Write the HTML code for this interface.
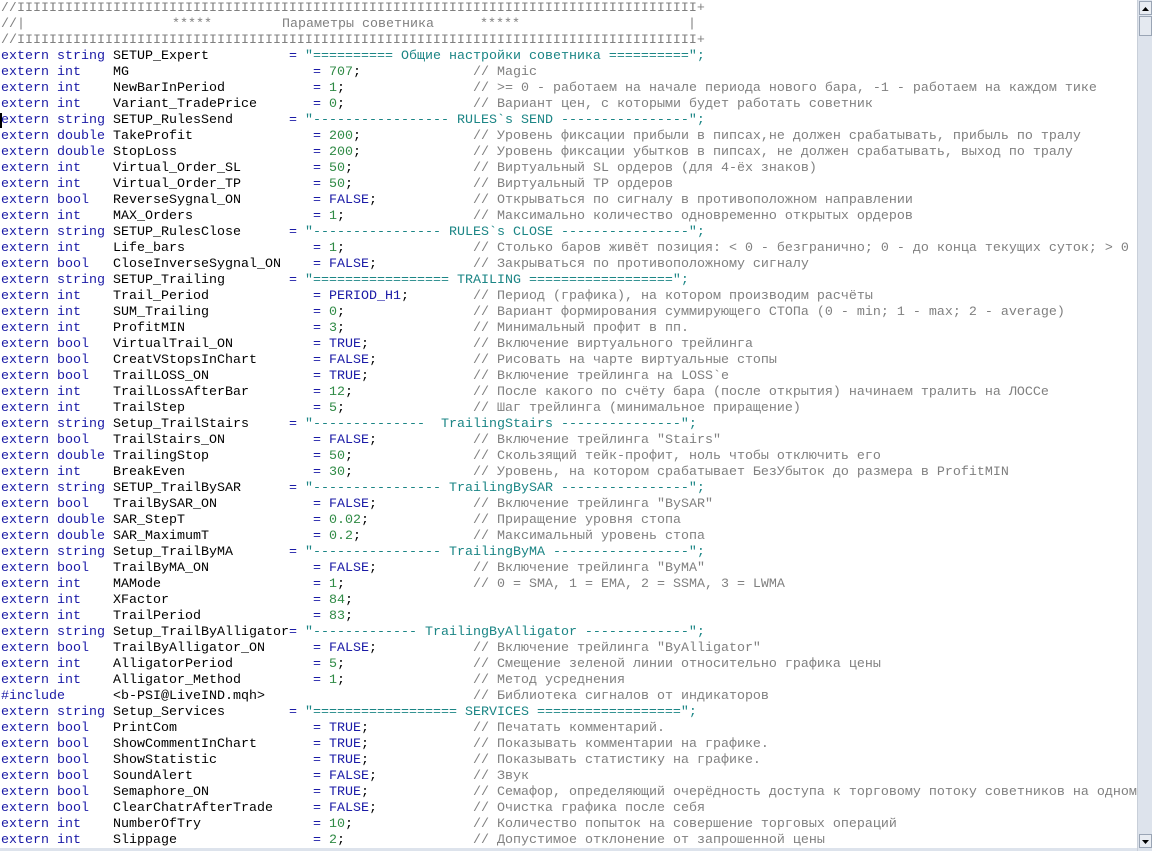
<!DOCTYPE html>
<html><head><meta charset="utf-8"><style>
html,body{margin:0;padding:0;background:#fff;width:1152px;height:851px;overflow:hidden}
#ed{position:absolute;left:0;top:2px;width:1137px;height:849px;overflow:hidden;font-family:"Liberation Mono","DejaVu Sans Mono",monospace;font-size:13.33px;color:#000}
.l{position:absolute;left:0;height:16px;line-height:16px;width:1400px;white-space:pre}
.l span{position:absolute;top:0}
.l span span{position:static}
.a{left:1px;color:#1a1aa6}
.b{left:113px}
.c{left:313px}
.s{left:289px}
.d{left:473px;color:#808080}
.g{color:#808080}
.k{color:#1a1aa6}
.n{color:#2f8a45}
.t{color:#1b8585}
#sb{position:absolute;left:1137px;top:0;width:15px;height:851px;background:#dde3ec;border-left:1px solid #c8cfd9}
.btn{position:absolute;left:1px;width:13px;height:14px;background:#e8ecf2;border:1px solid #9aa5b5;box-sizing:border-box}
</style></head><body>
<div id="ed">
<div class="l g" style="top:-1px"><span style="left:1px">//IIIIIIIIIIIIIIIIIIIIIIIIIIIIIIIIIIIIIIIIIIIIIIIIIIIIIIIIIIIIIIIIIIIIIIIIIIIIIIIIIIIII+</span></div>
<div class="l g" style="top:15px"><span style="left:1px">//|</span><span style="left:172px">*****</span><span style="left:282px">Параметры советника</span><span style="left:480px">*****</span><span style="left:688px">|</span></div>
<div class="l g" style="top:31px"><span style="left:1px">//IIIIIIIIIIIIIIIIIIIIIIIIIIIIIIIIIIIIIIIIIIIIIIIIIIIIIIIIIIIIIIIIIIIIIIIIIIIIIIIIIIIII+</span></div>
<div class="l" style="top:47px"><span class="a">extern string</span><span class="b">SETUP_Expert</span><span class="s"><span class="k">=</span> <span class="t">"========== Общие настройки советника ==========";</span></span></div>
<div class="l" style="top:63px"><span class="a">extern int</span><span class="b">MG</span><span class="c"><span class="k">=</span> <span class="n">707</span>;</span><span class="d">// Magic</span></div>
<div class="l" style="top:79px"><span class="a">extern int</span><span class="b">NewBarInPeriod</span><span class="c"><span class="k">=</span> <span class="n">1</span>;</span><span class="d">// &gt;= 0 - работаем на начале периода нового бара, -1 - работаем на каждом тике</span></div>
<div class="l" style="top:95px"><span class="a">extern int</span><span class="b">Variant_TradePrice</span><span class="c"><span class="k">=</span> <span class="n">0</span>;</span><span class="d">// Вариант цен, с которыми будет работать советник</span></div>
<div class="l" style="top:111px"><span style="left:0;width:2px;height:15px;background:#000"></span><span class="a">extern string</span><span class="b">SETUP_RulesSend</span><span class="s"><span class="k">=</span> <span class="t">"----------------- RULES`s SEND ----------------";</span></span></div>
<div class="l" style="top:127px"><span class="a">extern double</span><span class="b">TakeProfit</span><span class="c"><span class="k">=</span> <span class="n">200</span>;</span><span class="d">// Уровень фиксации прибыли в пипсах,не должен срабатывать, прибыль по тралу</span></div>
<div class="l" style="top:143px"><span class="a">extern double</span><span class="b">StopLoss</span><span class="c"><span class="k">=</span> <span class="n">200</span>;</span><span class="d">// Уровень фиксации убытков в пипсах, не должен срабатывать, выход по тралу</span></div>
<div class="l" style="top:159px"><span class="a">extern int</span><span class="b">Virtual_Order_SL</span><span class="c"><span class="k">=</span> <span class="n">50</span>;</span><span class="d">// Виртуальный SL ордеров (для 4-ёх знаков)</span></div>
<div class="l" style="top:175px"><span class="a">extern int</span><span class="b">Virtual_Order_TP</span><span class="c"><span class="k">=</span> <span class="n">50</span>;</span><span class="d">// Виртуальный TP ордеров</span></div>
<div class="l" style="top:191px"><span class="a">extern bool</span><span class="b">ReverseSygnal_ON</span><span class="c"><span class="k">= FALSE</span>;</span><span class="d">// Открываться по сигналу в противоположном направлении</span></div>
<div class="l" style="top:207px"><span class="a">extern int</span><span class="b">MAX_Orders</span><span class="c"><span class="k">=</span> <span class="n">1</span>;</span><span class="d">// Максимально количество одновременно открытых ордеров</span></div>
<div class="l" style="top:223px"><span class="a">extern string</span><span class="b">SETUP_RulesClose</span><span class="s"><span class="k">=</span> <span class="t">"---------------- RULES`s CLOSE ----------------";</span></span></div>
<div class="l" style="top:239px"><span class="a">extern int</span><span class="b">Life_bars</span><span class="c"><span class="k">=</span> <span class="n">1</span>;</span><span class="d">// Столько баров живёт позиция: &lt; 0 - безгранично; 0 - до конца текущих суток; &gt; 0</span></div>
<div class="l" style="top:255px"><span class="a">extern bool</span><span class="b">CloseInverseSygnal_ON</span><span class="c"><span class="k">= FALSE</span>;</span><span class="d">// Закрываться по противоположному сигналу</span></div>
<div class="l" style="top:271px"><span class="a">extern string</span><span class="b">SETUP_Trailing</span><span class="s"><span class="k">=</span> <span class="t">"================= TRAILING ==================";</span></span></div>
<div class="l" style="top:287px"><span class="a">extern int</span><span class="b">Trail_Period</span><span class="c"><span class="k">= PERIOD_H1</span>;</span><span class="d">// Период (графика), на котором производим расчёты</span></div>
<div class="l" style="top:303px"><span class="a">extern int</span><span class="b">SUM_Trailing</span><span class="c"><span class="k">=</span> <span class="n">0</span>;</span><span class="d">// Вариант формирования суммирующего СТОПа (0 - min; 1 - max; 2 - average)</span></div>
<div class="l" style="top:319px"><span class="a">extern int</span><span class="b">ProfitMIN</span><span class="c"><span class="k">=</span> <span class="n">3</span>;</span><span class="d">// Минимальный профит в пп.</span></div>
<div class="l" style="top:335px"><span class="a">extern bool</span><span class="b">VirtualTrail_ON</span><span class="c"><span class="k">= TRUE</span>;</span><span class="d">// Включение виртуального трейлинга</span></div>
<div class="l" style="top:351px"><span class="a">extern bool</span><span class="b">CreatVStopsInChart</span><span class="c"><span class="k">= FALSE</span>;</span><span class="d">// Рисовать на чарте виртуальные стопы</span></div>
<div class="l" style="top:367px"><span class="a">extern bool</span><span class="b">TrailLOSS_ON</span><span class="c"><span class="k">= TRUE</span>;</span><span class="d">// Включение трейлинга на LOSS`е</span></div>
<div class="l" style="top:383px"><span class="a">extern int</span><span class="b">TrailLossAfterBar</span><span class="c"><span class="k">=</span> <span class="n">12</span>;</span><span class="d">// После какого по счёту бара (после открытия) начинаем тралить на ЛОССе</span></div>
<div class="l" style="top:399px"><span class="a">extern int</span><span class="b">TrailStep</span><span class="c"><span class="k">=</span> <span class="n">5</span>;</span><span class="d">// Шаг трейлинга (минимальное приращение)</span></div>
<div class="l" style="top:415px"><span class="a">extern string</span><span class="b">Setup_TrailStairs</span><span class="s"><span class="k">=</span> <span class="t">"--------------  TrailingStairs ---------------";</span></span></div>
<div class="l" style="top:431px"><span class="a">extern bool</span><span class="b">TrailStairs_ON</span><span class="c"><span class="k">= FALSE</span>;</span><span class="d">// Включение трейлинга "Stairs"</span></div>
<div class="l" style="top:447px"><span class="a">extern double</span><span class="b">TrailingStop</span><span class="c"><span class="k">=</span> <span class="n">50</span>;</span><span class="d">// Скользящий тейк-профит, ноль чтобы отключить его</span></div>
<div class="l" style="top:463px"><span class="a">extern int</span><span class="b">BreakEven</span><span class="c"><span class="k">=</span> <span class="n">30</span>;</span><span class="d">// Уровень, на котором срабатывает БезУбыток до размера в ProfitMIN</span></div>
<div class="l" style="top:479px"><span class="a">extern string</span><span class="b">SETUP_TrailBySAR</span><span class="s"><span class="k">=</span> <span class="t">"---------------- TrailingBySAR ----------------";</span></span></div>
<div class="l" style="top:495px"><span class="a">extern bool</span><span class="b">TrailBySAR_ON</span><span class="c"><span class="k">= FALSE</span>;</span><span class="d">// Включение трейлинга "BySAR"</span></div>
<div class="l" style="top:511px"><span class="a">extern double</span><span class="b">SAR_StepT</span><span class="c"><span class="k">=</span> <span class="n">0.02</span>;</span><span class="d">// Приращение уровня стопа</span></div>
<div class="l" style="top:527px"><span class="a">extern double</span><span class="b">SAR_MaximumT</span><span class="c"><span class="k">=</span> <span class="n">0.2</span>;</span><span class="d">// Максимальный уровень стопа</span></div>
<div class="l" style="top:543px"><span class="a">extern string</span><span class="b">Setup_TrailByMA</span><span class="s"><span class="k">=</span> <span class="t">"---------------- TrailingByMA -----------------";</span></span></div>
<div class="l" style="top:559px"><span class="a">extern bool</span><span class="b">TrailByMA_ON</span><span class="c"><span class="k">= FALSE</span>;</span><span class="d">// Включение трейлинга "ByMA"</span></div>
<div class="l" style="top:575px"><span class="a">extern int</span><span class="b">MAMode</span><span class="c"><span class="k">=</span> <span class="n">1</span>;</span><span class="d">// 0 = SMA, 1 = EMA, 2 = SSMA, 3 = LWMA</span></div>
<div class="l" style="top:591px"><span class="a">extern int</span><span class="b">XFactor</span><span class="c"><span class="k">=</span> <span class="n">84</span>;</span></div>
<div class="l" style="top:607px"><span class="a">extern int</span><span class="b">TrailPeriod</span><span class="c"><span class="k">=</span> <span class="n">83</span>;</span></div>
<div class="l" style="top:623px"><span class="a">extern string</span><span class="b">Setup_TrailByAlligator<span class="k">=</span></span><span class="t" style="left:305px">"------------- TrailingByAlligator -------------";</span></div>
<div class="l" style="top:639px"><span class="a">extern bool</span><span class="b">TrailByAlligator_ON</span><span class="c"><span class="k">= FALSE</span>;</span><span class="d">// Включение трейлинга "ByAlligator"</span></div>
<div class="l" style="top:655px"><span class="a">extern int</span><span class="b">AlligatorPeriod</span><span class="c"><span class="k">=</span> <span class="n">5</span>;</span><span class="d">// Смещение зеленой линии относительно графика цены</span></div>
<div class="l" style="top:671px"><span class="a">extern int</span><span class="b">Alligator_Method</span><span class="c"><span class="k">=</span> <span class="n">1</span>;</span><span class="d">// Метод усреднения</span></div>
<div class="l" style="top:687px"><span class="a">#include</span><span class="b">&lt;b-PSI@LiveIND.mqh&gt;</span><span class="d">// Библиотека сигналов от индикаторов</span></div>
<div class="l" style="top:703px"><span class="a">extern string</span><span class="b">Setup_Services</span><span class="s"><span class="k">=</span> <span class="t">"================== SERVICES ==================";</span></span></div>
<div class="l" style="top:719px"><span class="a">extern bool</span><span class="b">PrintCom</span><span class="c"><span class="k">= TRUE</span>;</span><span class="d">// Печатать комментарий.</span></div>
<div class="l" style="top:735px"><span class="a">extern bool</span><span class="b">ShowCommentInChart</span><span class="c"><span class="k">= TRUE</span>;</span><span class="d">// Показывать комментарии на графике.</span></div>
<div class="l" style="top:751px"><span class="a">extern bool</span><span class="b">ShowStatistic</span><span class="c"><span class="k">= TRUE</span>;</span><span class="d">// Показывать статистику на графике.</span></div>
<div class="l" style="top:767px"><span class="a">extern bool</span><span class="b">SoundAlert</span><span class="c"><span class="k">= FALSE</span>;</span><span class="d">// Звук</span></div>
<div class="l" style="top:783px"><span class="a">extern bool</span><span class="b">Semaphore_ON</span><span class="c"><span class="k">= TRUE</span>;</span><span class="d">// Семафор, определяющий очерёдность доступа к торговому потоку советников на одном</span></div>
<div class="l" style="top:799px"><span class="a">extern bool</span><span class="b">ClearChatrAfterTrade</span><span class="c"><span class="k">= FALSE</span>;</span><span class="d">// Очистка графика после себя</span></div>
<div class="l" style="top:815px"><span class="a">extern int</span><span class="b">NumberOfTry</span><span class="c"><span class="k">=</span> <span class="n">10</span>;</span><span class="d">// Количество попыток на совершение торговых операций</span></div>
<div class="l" style="top:831px"><span class="a">extern int</span><span class="b">Slippage</span><span class="c"><span class="k">=</span> <span class="n">2</span>;</span><span class="d">// Допустимое отклонение от запрошенной цены</span></div>
</div>
<div style="position:absolute;left:0;top:848px;width:1137px;height:3px;background:#dde3ec"></div>
<div id="sb">
<div class="btn" style="top:1px"><svg width="11" height="12" viewBox="0 0 11 12"><path d="M2 8 L5.5 4 L9 8 Z" fill="#000"/></svg></div>
<div class="btn" style="top:16px;height:20px;background:#e4e9f0"></div>
<div class="btn" style="top:834px"><svg width="11" height="12" viewBox="0 0 11 12"><path d="M2 4 L5.5 8 L9 4 Z" fill="#000"/></svg></div>
</div>
</body></html>
